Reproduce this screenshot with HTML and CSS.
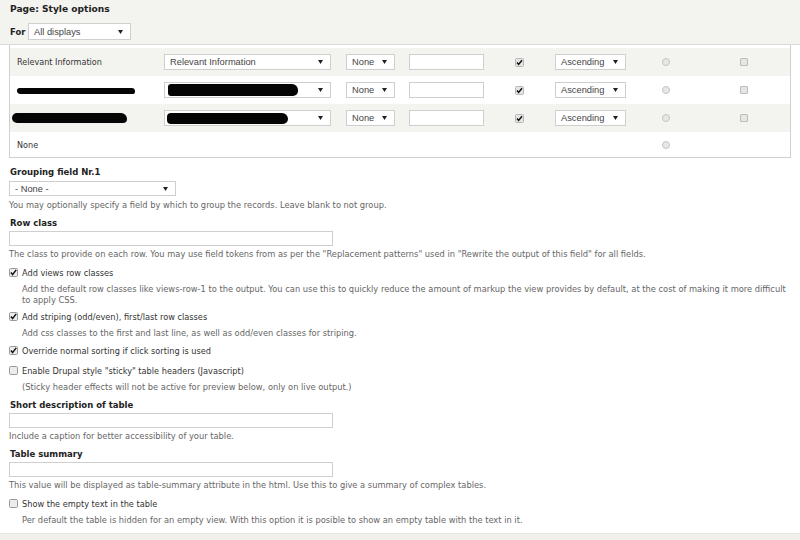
FILE: index.html
```html
<!DOCTYPE html>
<html>
<head>
<meta charset="utf-8">
<link rel="stylesheet" href="styles.css">
</head>
<body>
<div class="header">
  <h2 class="title">Page: Style options</h2>
  <div class="for-row">
    <span class="for-label">For</span>
    <div class="select sel-displays"><span>All displays</span><svg class="caret" width="5" height="4" viewBox="0 0 5 4"><path d="M0 0H5L2.5 4Z"/></svg></div>
  </div>
</div>

<div class="table-box">
  <div class="trow odd">
    <div class="cell name">Relevant Information</div>
    <div class="select sel-field"><span>Relevant Information</span><svg class="caret" width="5" height="4" viewBox="0 0 5 4"><path d="M0 0H5L2.5 4Z"/></svg></div>
    <div class="select sel-none"><span>None</span><svg class="caret" width="5" height="4" viewBox="0 0 5 4"><path d="M0 0H5L2.5 4Z"/></svg></div>
    <div class="input sel-sep"></div>
    <svg class="cb" width="9" height="9" viewBox="0 0 9 9"><rect x="0.5" y="0.5" width="8" height="8" rx="1" fill="#e4e4e4" stroke="#b8b8b8"/><path d="M2 4.6L3.6 6.4L7 2.2" fill="none" stroke="#111" stroke-width="1.5"/></svg>
    <div class="select sel-order"><span>Ascending</span><svg class="caret" width="5" height="4" viewBox="0 0 5 4"><path d="M0 0H5L2.5 4Z"/></svg></div>
    <span class="radio"></span>
    <span class="cb-off"></span>
  </div>
  <div class="trow">
    <div class="cell name"><span class="blot blot-a"></span></div>
    <div class="select sel-field"><span class="blot blot-b"></span><svg class="caret" width="5" height="4" viewBox="0 0 5 4"><path d="M0 0H5L2.5 4Z"/></svg></div>
    <div class="select sel-none"><span>None</span><svg class="caret" width="5" height="4" viewBox="0 0 5 4"><path d="M0 0H5L2.5 4Z"/></svg></div>
    <div class="input sel-sep"></div>
    <svg class="cb" width="9" height="9" viewBox="0 0 9 9"><rect x="0.5" y="0.5" width="8" height="8" rx="1" fill="#e4e4e4" stroke="#b8b8b8"/><path d="M2 4.6L3.6 6.4L7 2.2" fill="none" stroke="#111" stroke-width="1.5"/></svg>
    <div class="select sel-order"><span>Ascending</span><svg class="caret" width="5" height="4" viewBox="0 0 5 4"><path d="M0 0H5L2.5 4Z"/></svg></div>
    <span class="radio"></span>
    <span class="cb-off"></span>
  </div>
  <div class="trow odd">
    <div class="cell name"><span class="blot blot-c"></span></div>
    <div class="select sel-field"><span class="blot blot-d"></span><svg class="caret" width="5" height="4" viewBox="0 0 5 4"><path d="M0 0H5L2.5 4Z"/></svg></div>
    <div class="select sel-none"><span>None</span><svg class="caret" width="5" height="4" viewBox="0 0 5 4"><path d="M0 0H5L2.5 4Z"/></svg></div>
    <div class="input sel-sep"></div>
    <svg class="cb" width="9" height="9" viewBox="0 0 9 9"><rect x="0.5" y="0.5" width="8" height="8" rx="1" fill="#e4e4e4" stroke="#b8b8b8"/><path d="M2 4.6L3.6 6.4L7 2.2" fill="none" stroke="#111" stroke-width="1.5"/></svg>
    <div class="select sel-order"><span>Ascending</span><svg class="caret" width="5" height="4" viewBox="0 0 5 4"><path d="M0 0H5L2.5 4Z"/></svg></div>
    <span class="radio"></span>
    <span class="cb-off"></span>
  </div>
  <div class="trow last">
    <div class="cell name">None</div>
    <span></span><span></span><span></span><span></span><span></span>
    <span class="radio"></span>
    <span></span>
  </div>
</div>

<div class="form">
  <div class="label">Grouping field Nr.1</div>
  <div class="select sel-group"><span>- None -</span><svg class="caret" width="5" height="4" viewBox="0 0 5 4"><path d="M0 0H5L2.5 4Z"/></svg></div>
  <div class="desc">You may optionally specify a field by which to group the records. Leave blank to not group.</div>

  <div class="label mt">Row class</div>
  <div class="input wide"></div>
  <div class="desc">The class to provide on each row. You may use field tokens from as per the "Replacement patterns" used in "Rewrite the output of this field" for all fields.</div>

  <div class="check mt">
    <svg class="fcb" width="9" height="9" viewBox="0 0 9 9"><rect x="0.5" y="0.5" width="8" height="8" rx="1.2" fill="#ececec" stroke="#9a9a9a"/><path d="M1.9 4.6L3.6 6.6L7.2 1.9" fill="none" stroke="#111" stroke-width="1.5"/></svg>
    <span>Add views row classes</span>
  </div>
  <div class="desc indent cdesc nowrap">Add the default row classes like views-row-1 to the output. You can use this to quickly reduce the amount of markup the view provides by default, at the cost of making it more difficult<br>to apply CSS.</div>

  <div class="check mt-s">
    <svg class="fcb" width="9" height="9" viewBox="0 0 9 9"><rect x="0.5" y="0.5" width="8" height="8" rx="1.2" fill="#ececec" stroke="#9a9a9a"/><path d="M1.9 4.6L3.6 6.6L7.2 1.9" fill="none" stroke="#111" stroke-width="1.5"/></svg>
    <span>Add striping (odd/even), first/last row classes</span>
  </div>
  <div class="desc indent cdesc">Add css classes to the first and last line, as well as odd/even classes for striping.</div>

  <div class="check mt-l">
    <svg class="fcb" width="9" height="9" viewBox="0 0 9 9"><rect x="0.5" y="0.5" width="8" height="8" rx="1.2" fill="#ececec" stroke="#9a9a9a"/><path d="M1.9 4.6L3.6 6.6L7.2 1.9" fill="none" stroke="#111" stroke-width="1.5"/></svg>
    <span>Override normal sorting if click sorting is used</span>
  </div>

  <div class="check mt-xl">
    <svg class="fcb" width="9" height="9" viewBox="0 0 9 9"><rect x="0.5" y="0.5" width="8" height="8" rx="1.2" fill="#ececec" stroke="#9a9a9a"/></svg>
    <span>Enable Drupal style "sticky" table headers (Javascript)</span>
  </div>
  <div class="desc indent cdesc">(Sticky header effects will not be active for preview below, only on live output.)</div>

  <div class="label mt">Short description of table</div>
  <div class="input wide"></div>
  <div class="desc">Include a caption for better accessibility of your table.</div>

  <div class="label mt">Table summary</div>
  <div class="input wide"></div>
  <div class="desc">This value will be displayed as table-summary attribute in the html. Use this to give a summary of complex tables.</div>

  <div class="check mt">
    <svg class="fcb" width="9" height="9" viewBox="0 0 9 9"><rect x="0.5" y="0.5" width="8" height="8" rx="1.2" fill="#ececec" stroke="#9a9a9a"/></svg>
    <span>Show the empty text in the table</span>
  </div>
  <div class="desc indent cdesc">Per default the table is hidden for an empty view. With this option it is posible to show an empty table with the text in it.</div>
</div>
<div class="footer"></div>
</body>
</html>
```

FILE: styles.css
```css
html, body {
  margin: 0;
  padding: 0;
  background: #fff;
}
body {
  font-family: "DejaVu Sans", Verdana, sans-serif;
  color: #333;
  font-size: 8px;
  width: 800px;
  height: 540px;
  overflow: hidden;
}
.header {
  background: #f3f3ef;
  height: 44px;
  border-bottom: 1px solid #dcdcd6;
  padding: 0 10px;
}
.title {
  margin: 0;
  padding-top: 3px;
  font-size: 9.1px;
  line-height: 13px;
  font-weight: bold;
  color: #222;
}
.for-row {
  display: flex;
  align-items: center;
  margin-top: 7px;
}
.for-label {
  font-weight: bold;
  font-size: 8.4px;
  width: 18px;
  color: #222;
}
.select {
  display: flex;
  align-items: center;
  justify-content: space-between;
  box-sizing: border-box;
  height: 16px;
  border: 1px solid #cfcfcf;
  background: #fff;
  padding: 0 7px 0 5px;
  font-family: "Liberation Sans", Arial, sans-serif;
  font-size: 9.3px;
  color: #444;
  white-space: nowrap;
  overflow: hidden;
}
.caret {
  flex: none;
  fill: #222;
}
.sel-displays { width: 103px; height: 17px; }
.table-box {
  margin-left: 9px;
  width: 782px;
  box-sizing: border-box;
  border: 1px solid #d0d0d0;
  border-top: none;
  padding-top: 3px;
  padding-bottom: 0;
}
.trow {
  display: grid;
  grid-template-columns: 147px 182px 63px 106px 40px 107px 78px 40px;
  align-items: center;
  height: 28px;
  padding-left: 7px;
}
.trow.odd { background: #f3f3ef; }
.trow.last { height: 25px; }
.cell.name {
  font-size: 8.1px;
  color: #333;
  white-space: nowrap;
}
.sel-field { width: 167px; }
.sel-none { width: 49px; }
.sel-sep { width: 75px; }
.sel-order { width: 71px; }
.input {
  box-sizing: border-box;
  height: 16px;
  border: 1px solid #cfcfcf;
  background: #fff;
}
.cb { display: block; }
.radio {
  display: block;
  width: 8px;
  height: 8px;
  box-sizing: border-box;
  border-radius: 50%;
  border: 1px solid #c4c4c4;
  background: #e7e7e5;
}
.cb-off {
  display: block;
  width: 8px;
  height: 8px;
  box-sizing: border-box;
  border-radius: 1px;
  border: 1px solid #bdbdbd;
  background: #e5e5e3;
}
.blot {
  display: block;
  background: #050505;
  border-radius: 4px;
}
.blot-a { width: 118px; height: 6px; margin-top: 1px; border-radius: 3px 4px 3px 4px; }
.blot-b { width: 130px; height: 12px; margin-left: -2px; border-radius: 3px 6px 5px 3px; }
.blot-c { width: 115px; height: 10px; margin-left: -5px; border-radius: 5px 6px 4px 5px; }
.blot-d { width: 121px; height: 11px; margin-left: -3px; border-radius: 4px 6px 5px 4px; }

.form {
  padding: 9px 10px 0 9px;
}
.label {
  font-weight: bold;
  font-size: 8.5px;
  line-height: 11px;
  color: #222;
  padding-left: 1px;
}
.form > .label + .select { margin-top: 3px; }
.sel-group { width: 167px; height: 15px; }
.input.wide { width: 324px; height: 15px; margin-top: 2px; }
.desc {
  font-size: 8.3px;
  line-height: 11px;
  color: #666;
  margin-top: 4px;
}
.desc.nowrap { white-space: nowrap; }
.input.wide + .desc { margin-top: 3px; }
.desc.indent { padding-left: 13px; }
.desc.cdesc { margin-top: 6px; }
.mt { margin-top: 7px; }
.mt-s { margin-top: 5px; }
.mt-l { margin-top: 6px; }
.mt-xl { margin-top: 9px; }
.check {
  display: flex;
  align-items: center;
  height: 11px;
  font-size: 8.2px;
  color: #333;
}
.fcb {
  flex: none;
  margin-right: 4px;
}
.footer {
  margin-top: 7px;
  height: 20px;
  background: #efefeb;
  border-top: 1px solid #e4e4e0;
}
```
